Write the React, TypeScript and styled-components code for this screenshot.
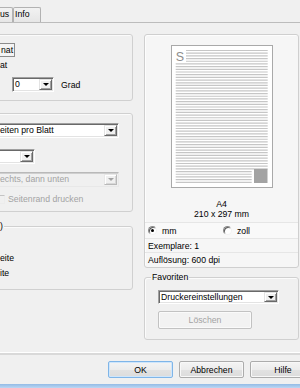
import React from "react";
import styled, { createGlobalStyle } from "styled-components";

const Global = createGlobalStyle`
  html, body { margin: 0; padding: 0; background: #f0f0f0; }
  body {
    font-family: "Liberation Sans", Arial, sans-serif;
    font-size: 8.7px;
    color: #000;
  }
  * { box-sizing: border-box; }
`;

const Window = styled.div`
  width: 300px;
  height: 388px;
  overflow: hidden;
  display: flex;
  flex-direction: column;
  background: #f0f0f0;
`;

const TabStrip = styled.div`
  height: 22px;
  display: flex;
  align-items: flex-end;
  flex-shrink: 0;
`;

const Tab = styled.div<{ $w: number; $ml?: number; $pl: number }>`
  width: ${(p) => p.$w}px;
  margin-left: ${(p) => p.$ml ?? 0}px;
  height: 15px;
  padding-left: ${(p) => p.$pl}px;
  line-height: 13px;
  border: 1px solid #b2b2b2;
  border-bottom: none;
  border-radius: 2px 2px 0 0;
  background: linear-gradient(#f2f2f2, #e6e6e6);
  white-space: nowrap;
  flex-shrink: 0;
`;

const Panel = styled.div`
  height: 330px;
  border-top: 1px solid #bcbcbc;
  flex-shrink: 0;
`;

const Columns = styled.div`
  display: flex;
  padding-top: 11px;
`;

const LeftCol = styled.div`
  margin-left: -20px;
  width: 153px;
  display: flex;
  flex-direction: column;
  flex-shrink: 0;
`;

const RightCol = styled.div`
  margin-left: 11px;
  width: 155px;
  display: flex;
  flex-direction: column;
  flex-shrink: 0;
`;

const Group = styled.div<{ $h: number; $mt: number; $pt: number }>`
  position: relative;
  height: ${(p) => p.$h}px;
  margin-top: ${(p) => p.$mt}px;
  padding-top: ${(p) => p.$pt}px;
  padding-left: 19px;
  border: 1px solid #d0d0d0;
  border-radius: 3px;
  box-shadow: inset 1px 1px 0 #fbfbfb;
  display: flex;
  flex-direction: column;
  align-items: flex-start;
`;

const Legend = styled.span<{ $left: number }>`
  position: absolute;
  top: -6px;
  left: ${(p) => p.$left}px;
  line-height: 10px;
  padding: 0 1px;
  background: #f0f0f0;
  white-space: nowrap;
`;

const Row = styled.div<{ $h: number; $mt?: number }>`
  height: ${(p) => p.$h}px;
  margin-top: ${(p) => p.$mt ?? 0}px;
  display: flex;
  align-items: center;
  white-space: nowrap;
`;

const FocusLabel = styled.span`
  height: 14px;
  margin-left: -2px;
  padding: 0 1px 0 2px;
  line-height: 12px;
  border: 1px solid #8c8c8c;
  background: #f4f4f4;
`;

const Label = styled.span<{ $ml?: number; $disabled?: boolean }>`
  margin-left: ${(p) => p.$ml ?? 0}px;
  color: ${(p) => (p.$disabled ? "#a3a3a3" : "#000")};
  white-space: nowrap;
`;

const Combo = styled.div<{ $w: number; $h?: number; $ml?: number; $disabled?: boolean }>`
  display: flex;
  width: ${(p) => p.$w}px;
  height: ${(p) => p.$h ?? 15}px;
  margin-left: ${(p) => p.$ml ?? 0}px;
  padding: 1px;
  flex-shrink: 0;
  background: ${(p) => (p.$disabled ? "#f0f0f0" : "#fff")};
  border: 1px solid;
  border-color: ${(p) =>
    p.$disabled ? "#b9b9b9 #e8e8e8 #e8e8e8 #b9b9b9" : "#a0a0a0 #ffffff #ffffff #a0a0a0"};
  box-shadow: ${(p) =>
    p.$disabled ? "inset 1px 1px 0 #cfcfcf" : "inset 1px 1px 0 #696969, inset -1px -1px 0 #e3e3e3"};
  color: ${(p) => (p.$disabled ? "#a3a3a3" : "#000")};
`;

const ComboText = styled.span<{ $pl: number }>`
  flex: 1;
  min-width: 0;
  padding-left: ${(p) => p.$pl}px;
  line-height: 11px;
  white-space: nowrap;
  display: flex;
  align-items: center;
`;

const ArrowBtn = styled.span<{ $disabled?: boolean }>`
  width: 13px;
  flex-shrink: 0;
  display: flex;
  align-items: center;
  justify-content: center;
  background: #f0f0f0;
  border: 1px solid;
  border-color: ${(p) => (p.$disabled ? "#e8e8e8 #b9b9b9 #b9b9b9 #e8e8e8" : "#e3e3e3 #696969 #696969 #e3e3e3")};
  box-shadow: inset 1px 1px 0 #ffffff, inset -1px -1px 0 ${(p) => (p.$disabled ? "#d8d8d8" : "#a0a0a0")};
  &::after {
    content: "";
    border-left: 3px solid transparent;
    border-right: 3px solid transparent;
    border-top: 3px solid ${(p) => (p.$disabled ? "#a3a3a3" : "#000")};
  }
`;

const CheckBox = styled.span`
  width: 9px;
  height: 9px;
  margin-left: -4px;
  flex-shrink: 0;
  border: 1px solid;
  border-color: #c4c4c4 #ececec #ececec #c4c4c4;
  background: #f0f0f0;
`;

const PreviewBox = styled.div`
  height: 234px;
  padding-top: 10px;
  border: 1px solid #cfcfcf;
  border-radius: 3px;
  background: #f6f6f6;
  box-shadow: inset 1px 1px 0 #fdfdfd;
  display: flex;
  flex-direction: column;
`;

const PaperArt = styled.svg`
  display: block;
  margin-left: 26px;
  flex-shrink: 0;
`;

const Caption = styled.div`
  margin-top: 11px;
  text-align: center;
  line-height: 10px;
`;

const InfoRow = styled.div<{ $h: number; $mt?: number; $light?: boolean }>`
  height: ${(p) => p.$h}px;
  margin-top: ${(p) => p.$mt ?? 0}px;
  padding-left: 3px;
  display: flex;
  align-items: center;
  border-top: 1px solid #e6e6e6;
  background: ${(p) => (p.$light ? "#f9f9f9" : "transparent")};
  white-space: nowrap;
`;

const RadioCell = styled.label<{ $w?: number }>`
  width: ${(p) => (p.$w ? `${p.$w}px` : "auto")};
  display: flex;
  align-items: center;
  gap: 5px;
`;

const Radio = styled.span<{ $checked?: boolean }>`
  width: 9px;
  height: 9px;
  border-radius: 50%;
  flex-shrink: 0;
  border: 1px solid;
  border-color: #8a8a8a #f2f2f2 #f2f2f2 #8a8a8a;
  box-shadow: inset 1px 1px 0 #5c5c5c;
  background: #fff;
  display: flex;
  align-items: center;
  justify-content: center;
  &::after {
    content: "";
    width: 3px;
    height: 3px;
    border-radius: 50%;
    background: ${(p) => (p.$checked ? "#000" : "transparent")};
  }
`;

const WinButton = styled.button<{ $w: number; $h: number; $default?: boolean; $ml?: number; $mt?: number }>`
  width: ${(p) => p.$w}px;
  height: ${(p) => p.$h}px;
  margin-left: ${(p) => p.$ml ?? 0}px;
  margin-top: ${(p) => p.$mt ?? 0}px;
  flex-shrink: 0;
  padding: 0;
  font: inherit;
  color: #000;
  border: 1px solid ${(p) => (p.$default ? "#7fb5e8" : "#acacac")};
  border-radius: 2px;
  background: linear-gradient(#f4f4f4, #ececec 50%, #e2e2e2 51%, #dcdcdc);
  box-shadow: inset 0 0 0 1px ${(p) => (p.$default ? "#cfe6fb" : "#f8f8f8")};
  &:disabled {
    color: #a3a3a3;
    border-color: #c2c2c2;
    background: #f2f2f2;
    box-shadow: inset 0 0 0 1px #fafafa;
  }
`;

const Separator = styled.div`
  height: 3px;
  border-top: 1px solid #ffffff;
  background: #d9d9d9;
  flex-shrink: 0;
`;

const ButtonRow = styled.div`
  display: flex;
  gap: 6px;
  padding: 6px 0 0 108px;
  flex-shrink: 0;
`;

const Frame = styled.div`
  margin-top: auto;
  height: 4px;
  background: linear-gradient(#93bbe6, #bcd7f3);
  flex-shrink: 0;
`;

function Paper() {
  const lines = [] as React.ReactNode[];
  for (let i = 0; i < 50; i++) {
    const y = 5.5 + i * 2.69;
    const x1 = y < 17 ? 15 : 4.7;
    const x2 = y > 124 ? 80.7 : 96.7;
    lines.push(<line key={i} x1={x1} x2={x2} y1={y} y2={y} stroke="#c6c6c6" strokeWidth={1.2} />);
  }
  return (
    <PaperArt width={102} height={143} viewBox="0 0 102 143">
      <rect x={0.5} y={0.5} width={101} height={142} fill="#fff" stroke="#a9a9a9" />
      {lines}
      <text x={4.8} y={16.4} fontSize={12.5} fill="#8d8d8d" fontFamily="Liberation Sans, Arial, sans-serif">
        S
      </text>
      <rect x={83} y={124} width={13.5} height={14} fill="#a3a3a3" />
    </PaperArt>
  );
}

export default function App() {
  return (
    <>
      <Global />
      <Window>
        <TabStrip>
          <Tab $w={23} $ml={-10} $pl={9}>us</Tab>
          <Tab $w={28} $pl={1}>Info</Tab>
        </TabStrip>
        <Panel>
          <Columns>
            <LeftCol>
              <Group $h={67} $mt={0} $pt={8}>
                <Row $h={14}>
                  <FocusLabel>nat</FocusLabel>
                </Row>
                <Row $h={14} $mt={1}>
                  <Label>at</Label>
                </Row>
                <Row $h={15} $mt={5}>
                  <Combo $w={42} $ml={12}>
                    <ComboText $pl={1}>0</ComboText>
                    <ArrowBtn />
                  </Combo>
                  <Label $ml={7}>Grad</Label>
                </Row>
              </Group>

              <Group $h={99} $mt={12} $pt={9}>
                <Row $h={15}>
                  <Combo $w={124} $ml={-5}>
                    <ComboText $pl={3}>eiten pro Blatt</ComboText>
                    <ArrowBtn />
                  </Combo>
                </Row>
                <Row $h={15} $mt={11}>
                  <Combo $w={40} $ml={-5}>
                    <ComboText $pl={3}></ComboText>
                    <ArrowBtn />
                  </Combo>
                </Row>
                <Row $h={15} $mt={8}>
                  <Combo $w={124} $ml={-5} $disabled>
                    <ComboText $pl={3}>echts, dann unten</ComboText>
                    <ArrowBtn $disabled />
                  </Combo>
                </Row>
                <Row $h={12} $mt={6}>
                  <CheckBox />
                  <Label $ml={3} $disabled>Seitenrand drucken</Label>
                </Row>
              </Group>

              <Group $h={64} $mt={14} $pt={26}>
                <Legend $left={18}>)</Legend>
                <Row $h={10}>
                  <Label>eite</Label>
                </Row>
                <Row $h={10} $mt={5}>
                  <Label>ite</Label>
                </Row>
              </Group>
            </LeftCol>

            <RightCol>
              <PreviewBox>
                <Paper />
                <Caption>
                  A4
                  <br />
                  210 x 297 mm
                </Caption>
                <InfoRow $h={16} $mt={3} $light>
                  <RadioCell $w={75}>
                    <Radio $checked />
                    mm
                  </RadioCell>
                  <RadioCell>
                    <Radio />
                    zoll
                  </RadioCell>
                </InfoRow>
                <InfoRow $h={14}>Exemplare: 1</InfoRow>
                <InfoRow $h={15}>Auflösung: 600 dpi</InfoRow>
              </PreviewBox>

              <Group $h={63} $mt={9} $pt={12}>
                <Legend $left={6}>Favoriten</Legend>
                <Combo $w={121} $h={14} $ml={-6}>
                  <ComboText $pl={1}>Druckereinstellungen</ComboText>
                  <ArrowBtn />
                </Combo>
                <WinButton $w={94} $h={18} $ml={-6} $mt={7} disabled>
                  Löschen
                </WinButton>
              </Group>
            </RightCol>
          </Columns>
        </Panel>
        <Separator />
        <ButtonRow>
          <WinButton $w={65} $h={17} $default>OK</WinButton>
          <WinButton $w={65} $h={17}>Abbrechen</WinButton>
          <WinButton $w={66} $h={17}>Hilfe</WinButton>
        </ButtonRow>
        <Frame />
      </Window>
    </>
  );
}
